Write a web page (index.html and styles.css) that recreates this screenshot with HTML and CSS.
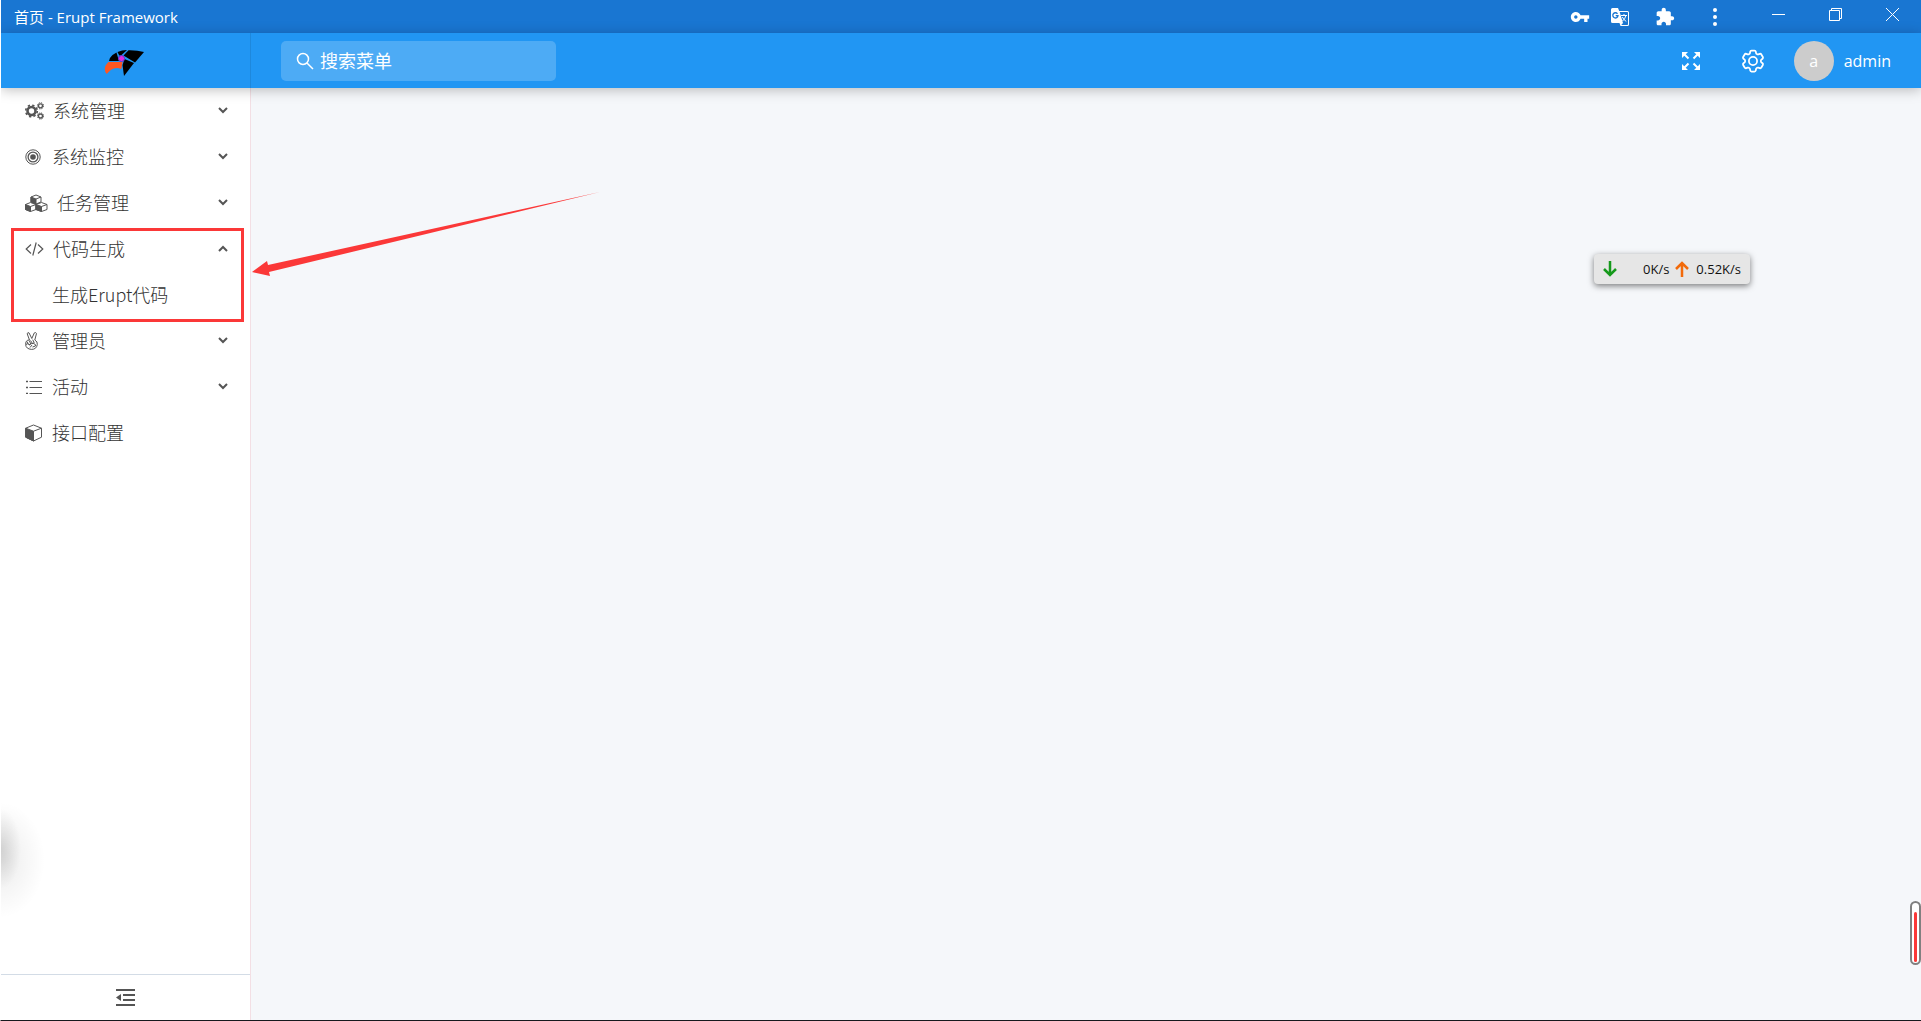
FILE: index.html
```html
<!DOCTYPE html>
<html lang="zh-CN">
<head>
  <meta charset="UTF-8">
  <meta name="viewport" content="width=device-width, initial-scale=1.0">
  <title>首页 - Erupt Framework</title>
  <link rel="stylesheet" href="styles.css">
</head>
<body>
  <div class="titlebar">
    <span class="window-title">首页 - Erupt Framework</span>
    <button class="tool" aria-label="密码">
      <svg width="20" height="20" viewBox="0 0 24 24" fill="currentColor"><path d="M12.65 10C11.83 7.67 9.61 6 7 6c-3.31 0-6 2.69-6 6s2.69 6 6 6c2.61 0 4.83-1.67 5.65-4H17v4h4v-4h2v-4H12.65zM7 14c-1.1 0-2-.9-2-2s.9-2 2-2 2 .9 2 2-.9 2-2 2z"/></svg>
    </button>
    <button class="tool" aria-label="翻译">
      <svg width="18" height="18" viewBox="0 0 18 18" fill="none" stroke="currentColor">
        <path d="M1.500 0H7l1.200 3H16.500Q18 3 18 4.500V16.500Q18 18 16.500 18H9.500L8.500 15H1.500Q0 15 0 13.500V1.500Q0 0 1.500 0z" fill="currentColor" stroke="none"/>
        <path d="M8.700 4H16.300Q17 4 17 4.700V16.300Q17 17 16.300 17H10.300L12 15z" fill="#1976d2" stroke="none"/>
        <path d="M6.500 5.800A2.600 2.600 0 1 0 7 7.700H4.700" stroke="#1976d2" stroke-width="1.300"/>
        <path d="M10 7.500h6M13 6v1.500M15 7.500Q14 11 11.500 13M11.300 9Q12.500 11.500 15.300 13.500"/>
      </svg>
    </button>
    <button class="tool wide" aria-label="扩展程序">
      <svg width="20" height="20" viewBox="0 0 24 24" fill="currentColor"><path d="M20.500 11H19V7c0-1.100-.9-2-2-2h-4V3.500C13 2.120 11.880 1 10.500 1S8 2.120 8 3.500V5H4c-1.100 0-1.990.9-1.990 2v3.800H3.500c1.490 0 2.700 1.210 2.700 2.700s-1.210 2.700-2.700 2.700H2V20c0 1.100.9 2 2 2h3.800v-1.500c0-1.490 1.210-2.700 2.700-2.700 1.490 0 2.700 1.210 2.700 2.700V22H17c1.100 0 2-.9 2-2v-4h1.500c1.380 0 2.500-1.120 2.500-2.500S21.880 11 20.500 11z"/></svg>
    </button>
    <button class="tool wide" aria-label="更多">
      <svg width="4" height="18" viewBox="0 0 4 18" fill="currentColor"><circle cx="2" cy="2" r="2"/><circle cx="2" cy="9" r="2"/><circle cx="2" cy="16" r="2"/></svg>
    </button>
    <div class="window-buttons">
      <button aria-label="最小化"><svg width="13" height="13" viewBox="0 0 13 13" stroke="currentColor"><path d="M0 6.500h13"/></svg></button>
      <button aria-label="还原"><svg width="13" height="13" viewBox="0 0 13 13" fill="none" stroke="currentColor"><path d="M.5 2.500h10v10H.5zM2.500 2.500V.5h10v10h-2"/></svg></button>
      <button aria-label="关闭"><svg width="13" height="13" viewBox="0 0 13 13" stroke="currentColor"><path d="M0 0l13 13M13 0L0 13"/></svg></button>
    </div>
  </div>

  <header class="header">
    <a class="logo" href="#" aria-label="Erupt">
      <svg width="40" height="26" viewBox="0 0 40 26">
        <path d="M5 11Q6 7 8.500 5L12.500 2.500L15 11z"/>
        <path d="M13.500 2Q18 0 23 0L17 5.500L15.300 5.500z"/>
        <path d="M24.500 .2Q33 0 40 2L31 12.500L19.500 5.500z"/>
        <path d="M20.500 9L30 13L20 26L18.500 15z"/>
        <path d="M4.500 12H18.500L17.300 19Q9 15.500 2.800 24Q-2 18 4.500 12z" fill="#ff5722"/>
        <circle cx="17.500" cy="8.500" r="3" fill="#e02be0" stroke="#5a35c8" stroke-width="1"/>
      </svg>
    </a>
    <div class="header-main">
      <label class="search">
        <svg width="18" height="18" viewBox="0 0 18 18" fill="none" stroke="currentColor" stroke-width="1.500"><circle cx="7" cy="7" r="5.500"/><path d="M11 11l6 6"/></svg>
        <input type="text" placeholder="搜索菜单" aria-label="搜索菜单">
      </label>
      <div class="actions">
        <button aria-label="全屏">
          <svg width="18" height="18" viewBox="0 0 18 18" fill="currentColor" stroke="currentColor" stroke-width="2"><path d="M2 2l4.500 4.500M16 2l-4.500 4.500M2 16l4.500-4.500M16 16l-4.500-4.500"/><path d="M0 0h6L0 6zM18 0h-6l6 6zM0 18h6l-6-6zM18 18h-6l6-6z" stroke="none"/></svg>
        </button>
        <button aria-label="设置">
          <svg width="28" height="28" viewBox="0 0 24 24" fill="none" stroke="currentColor" stroke-width="1.500"><path d="M9.594 3.940c.09-.542.56-.94 1.110-.94h2.593c.55 0 1.020.398 1.110.94l.213 1.281c.063.374.313.686.645.87.074.04.147.083.22.127.325.196.72.257 1.075.124l1.217-.456a1.125 1.125 0 0 1 1.370.49l1.296 2.247a1.125 1.125 0 0 1-.26 1.431l-1.003.827c-.293.241-.438.613-.43.992a7.723 7.723 0 0 1 0 .255c-.008.378.137.75.43.991l1.004.827c.424.35.534.955.26 1.430l-1.298 2.247a1.125 1.125 0 0 1-1.369.491l-1.217-.456c-.355-.133-.75-.072-1.076.124a6.470 6.470 0 0 1-.22.128c-.331.183-.581.495-.644.869l-.213 1.281c-.09.543-.56.94-1.110.94h-2.594c-.55 0-1.019-.398-1.110-.94l-.213-1.281c-.062-.374-.312-.686-.644-.87a6.520 6.520 0 0 1-.22-.127c-.325-.196-.72-.257-1.076-.124l-1.217.456a1.125 1.125 0 0 1-1.369-.49l-1.297-2.247a1.125 1.125 0 0 1 .26-1.431l1.004-.827c.292-.24.437-.613.43-.991a6.932 6.932 0 0 1 0-.255c.007-.38-.138-.751-.43-.992l-1.004-.827a1.125 1.125 0 0 1-.26-1.430l1.297-2.247a1.125 1.125 0 0 1 1.370-.491l1.216.456c.356.133.751.072 1.076-.124.072-.044.146-.086.22-.128.332-.183.582-.495.644-.869l.214-1.280Z"/><circle cx="12" cy="12" r="3.500"/></svg>
        </button>
        <a class="user" href="#"><span class="avatar">a</span>admin</a>
      </div>
    </div>
  </header>

  <div class="layout">
    <aside class="sidebar">
      <ul class="menu">
        <li>
          <button class="menu-item">
            <svg class="icon" width="19" height="18" viewBox="0 0 19 18" fill="none" stroke="currentColor">
              <circle cx="6.500" cy="9" r="4" stroke-width="2.600"/><circle cx="6.500" cy="9" r="5.800" stroke-width="1.600" stroke-dasharray="2.300 2.260"/>
              <circle cx="15.500" cy="3.800" r="2" stroke-width="1.300"/><circle cx="15.500" cy="3.800" r="3.100" stroke-dasharray="1.400 1.040"/>
              <circle cx="15.500" cy="14" r="2" stroke-width="1.300"/><circle cx="15.500" cy="14" r="3.100" stroke-dasharray="1.400 1.040"/>
            </svg>
            <span>系统管理</span>
            <svg class="arrow" width="10" height="7" viewBox="0 0 10 7"><path d="M1 1l4 4 4-4"/></svg>
          </button>
        </li>
        <li>
          <button class="menu-item">
            <svg class="icon" width="18" height="16" viewBox="0 0 18 16" fill="none" stroke="currentColor"><circle cx="8" cy="8" r="7.200"/><circle cx="8" cy="8" r="4.900" stroke-width="1.300"/><circle cx="8" cy="8" r="2.800" fill="currentColor" stroke="none"/></svg>
            <span>系统监控</span>
            <svg class="arrow" width="10" height="7" viewBox="0 0 10 7"><path d="M1 1l4 4 4-4"/></svg>
          </button>
        </li>
        <li>
          <button class="menu-item">
            <svg class="icon" width="23" height="18" viewBox="0 0 23 18" fill="#fff" stroke="currentColor" stroke-linejoin="round">
              <path d="M6 3L11 1l5 2v5L11 10 6 8z"/><path d="M6 3l5 2v5L6 8z" fill="currentColor"/><path d="M11 5l5-2"/>
              <path d="M.5 10.500l5-2 5.500 2v5l-5.500 2-5-2z"/><path d="M.5 10.500l5 2v5l-5-2z" fill="currentColor"/><path d="M5.500 12.500l5.500-2"/>
              <path d="M11 10.500l5.500-2 5.500 2v5l-5.500 2-5.500-2z"/><path d="M11 10.500l5.500 2v5l-5.500-2z" fill="currentColor"/><path d="M16.500 12.500l5.500-2"/>
            </svg>
            <span>任务管理</span>
            <svg class="arrow" width="10" height="7" viewBox="0 0 10 7"><path d="M1 1l4 4 4-4"/></svg>
          </button>
        </li>
        <li class="highlight">
          <button class="menu-item" aria-expanded="true">
            <svg class="icon" width="19" height="14" viewBox="0 0 19 14" fill="none" stroke="currentColor" stroke-width="1.200"><path d="M6 2.500L1.200 7 6 11.500M13 2.500L17.800 7 13 11.500M11.200 .5L7.800 13.500"/></svg>
            <span>代码生成</span>
            <svg class="arrow" width="10" height="7" viewBox="0 0 10 7"><path d="M1 6l4-4 4 4"/></svg>
          </button>
          <ul class="submenu">
            <li><a class="menu-item" href="#"><span>生成Erupt代码</span></a></li>
          </ul>
        </li>
        <li>
          <button class="menu-item">
            <svg class="icon" width="18" height="18" viewBox="0 0 18 18" fill="none" stroke="currentColor" stroke-linejoin="round">
              <path d="M4.500 8L2.200 1.800Q2.500 .2 4 .8L6.800 6.500L9.300 .9Q11 0 11.500 1.500L9.800 8Q12.800 9.500 12.300 12.500Q11.500 17.400 6.500 17.400Q1 17 .6 12.500Q.4 9.500 2.500 8.200z"/>
              <path d="M2 9.500l2 3.500 1.800-1-1.600-3.500M5.500 8.500l2 3 1.700-.8-1.500-3M4 13q2-2 4.500-1.500t2 2.500l-3 1M2.500 11l-1 2M7 13l-2 2.500"/>
            </svg>
            <span>管理员</span>
            <svg class="arrow" width="10" height="7" viewBox="0 0 10 7"><path d="M1 1l4 4 4-4"/></svg>
          </button>
        </li>
        <li>
          <button class="menu-item">
            <svg class="icon" width="18" height="14" viewBox="0 0 18 14" fill="none" stroke="currentColor"><path d="M4.500 1.500H17M4.500 7.500H17M4.500 13.500H17"/><path d="M1 1.500h2M1 7.500h2M1 13.500h2" stroke-width="1.500"/></svg>
            <span>活动</span>
            <svg class="arrow" width="10" height="7" viewBox="0 0 10 7"><path d="M1 1l4 4 4-4"/></svg>
          </button>
        </li>
        <li>
          <a class="menu-item" href="#">
            <svg class="icon" width="18" height="18" viewBox="0 0 18 18" fill="none" stroke="currentColor" stroke-linejoin="round"><path d="M.7 4.200L8.500 1l8 3.200v9L8.500 17l-7.800-3.800z"/><path d="M.7 4.200l7.800 3V17L.7 13.200z" fill="currentColor"/><path d="M8.500 7.200l8-3"/></svg>
            <span>接口配置</span>
          </a>
        </li>
      </ul>
      <button class="collapse" aria-label="收起菜单">
        <svg width="19" height="17" viewBox="0 0 19 17" fill="none" stroke="currentColor" stroke-width="2"><path d="M0 1h19M7 6h12M7 11h12M0 16h19"/><path d="M0 8.500L5 5v7z" fill="currentColor" stroke="none"/></svg>
      </button>
    </aside>

    <main class="content">
      <svg class="pointer" width="350" height="90" viewBox="0 0 350 90"><path d="M1 84L16 73L17 77L349 4L18 84L19 88z" fill="#fb3838"/></svg>
    </main>
  </div>

  <!-- desktop overlays -->
  <div class="netspeed">
    <svg width="14" height="16" viewBox="0 0 14 16" fill="none" stroke="#15991b" stroke-width="2.500"><path d="M7 0v14M1 8l6 6 6-6"/></svg>
    <span class="down">0K/s</span>
    <svg width="14" height="16" viewBox="0 0 14 16" fill="none" stroke="#f26a0a" stroke-width="2.500"><path d="M7 16V2M1 8l6-6 6 6"/></svg>
    <span>0.52K/s</span>
  </div>
  <div class="gauge"><div class="gauge-level"></div></div>
  <div class="side-shadow"></div>
  <div class="window-edge"></div>
</body>
</html>
```
FILE: styles.css
```css
* {
  box-sizing: border-box;
}
body {
  margin: 0;
  height: 100vh;
  display: flex;
  flex-direction: column;
  position: relative;
  overflow: hidden;
  border-left: 1px solid #fff;
  border-bottom: 1px solid #16181d;
  font-family: "Open Sans", "Noto Sans CJK SC", sans-serif;
  font-size: 18px;
  color: #555;
  background: #f5f7fa;
}
button {
  font: inherit;
  color: inherit;
  background: none;
  border: none;
  padding: 0;
  cursor: pointer;
}
a {
  color: inherit;
  text-decoration: none;
}
ul {
  list-style: none;
  margin: 0;
  padding: 0;
}
svg {
  display: block;
  flex-shrink: 0;
}

/* title bar */
.titlebar {
  height: 33px;
  flex-shrink: 0;
  display: flex;
  align-items: stretch;
  background: #1976d2;
  color: #fff;
}
.window-title {
  flex: 1;
  padding-left: 13px;
  font-size: 15px;
  line-height: 34px;
}
.tool {
  width: 40px;
  display: flex;
  align-items: center;
  justify-content: center;
}
.tool.wide {
  width: 50px;
}
.window-buttons {
  display: flex;
  margin-left: 10px;
}
.window-buttons button {
  width: 57px;
  padding-bottom: 4px;
  display: flex;
  align-items: center;
  justify-content: center;
}

/* header */
.header {
  height: 55px;
  flex-shrink: 0;
  display: flex;
  position: relative;
  z-index: 1;
  background: #2196f3;
  color: #fff;
  box-shadow: 0 2px 12px rgba(0, 0, 0, 0.25);
}
.logo {
  width: 250px;
  display: flex;
  align-items: center;
  justify-content: center;
  padding: 4px 4px 0 0;
  border-right: 1px solid #1e88dc;
}
.header-main {
  flex: 1;
  display: flex;
  align-items: center;
  justify-content: space-between;
  padding: 0 30px;
}
.search {
  width: 275px;
  height: 40px;
  display: flex;
  align-items: center;
  gap: 6px;
  padding: 0 15px;
  border-radius: 5px;
  background: rgba(255, 255, 255, 0.2);
}
.search input {
  flex: 1;
  min-width: 0;
  padding: 0;
  border: none;
  outline: none;
  background: none;
  color: #fff;
  font: inherit;
}
.search input::placeholder {
  color: #fff;
  opacity: 1;
}
.actions {
  display: flex;
  align-items: center;
}
.actions button {
  width: 62px;
  display: flex;
  justify-content: center;
}
.user {
  display: flex;
  align-items: center;
  gap: 10px;
  margin-left: 10px;
  font-size: 16px;
}
.avatar {
  width: 40px;
  height: 40px;
  border-radius: 50%;
  background: #ccc;
  text-align: center;
  line-height: 40px;
}

/* sidebar */
.layout {
  flex: 1;
  display: flex;
  min-height: 0;
}
.sidebar {
  width: 250px;
  display: flex;
  flex-direction: column;
  background: #fff;
  border-right: 1px solid #f3dfe4;
}
.menu {
  flex: 1;
}
.menu-item {
  width: 100%;
  height: 46px;
  display: flex;
  align-items: center;
  padding: 0 22px 0 24px;
  font-family: "Noto Sans CJK SC", sans-serif;
  font-weight: 300;
  text-align: left;
}
.menu-item span {
  padding-bottom: 2px;
  color: #333;
}
.menu-item:hover span {
  color: #2196f3;
}
.icon {
  margin-right: 9px;
}
.arrow {
  margin-left: auto;
  margin-bottom: 2px;
  fill: none;
  stroke: currentColor;
  stroke-width: 2;
}
.submenu .menu-item {
  padding-left: 51px;
}
.highlight {
  position: relative;
}
.highlight::after {
  content: "";
  position: absolute;
  top: 2px;
  right: 6px;
  bottom: -4px;
  left: 10px;
  border: 3px solid #fb3838;
  pointer-events: none;
}
.collapse {
  height: 46px;
  display: flex;
  align-items: center;
  justify-content: center;
  border-top: 1px solid #d3dce6;
}
.content {
  flex: 1;
  position: relative;
}
.pointer {
  position: absolute;
  top: 100px;
  left: 0;
}

/* overlays */
.netspeed {
  position: absolute;
  top: 254px;
  right: 171px;
  height: 30px;
  display: flex;
  align-items: center;
  padding: 0 9px;
  border-radius: 4px;
  background: #e6e6e6;
  box-shadow: 0 2px 6px rgba(0, 0, 0, 0.5);
  color: #111;
  font-size: 13px;
}
.netspeed svg {
  margin-right: 7px;
}
.netspeed .down {
  width: 45px;
  margin-right: 6px;
  text-align: right;
}
.gauge {
  position: absolute;
  right: 0;
  bottom: 55px;
  width: 11px;
  height: 64px;
  padding: 9px 2px 1px;
  border: 2px solid #808080;
  border-radius: 6px;
  background: #fff;
}
.gauge-level {
  height: 100%;
  border-radius: 2px;
  background: #fb3838;
}
.side-shadow {
  position: absolute;
  left: 0;
  bottom: 90px;
  width: 44px;
  height: 140px;
  background:
    radial-gradient(ellipse 20px 40px at 0 42%, rgba(0, 0, 0, 0.12), transparent),
    radial-gradient(ellipse 44px 58px at 0 50%, rgba(0, 0, 0, 0.08), transparent);
}
.window-edge {
  position: absolute;
  top: 0;
  bottom: 0;
  left: -1px;
  width: 1px;
  z-index: 2;
  background: linear-gradient(#000 66px, #e4e4e4 66px, #e4e4e4 calc(100% - 102px), #0b0d14 calc(100% - 102px));
}
```
